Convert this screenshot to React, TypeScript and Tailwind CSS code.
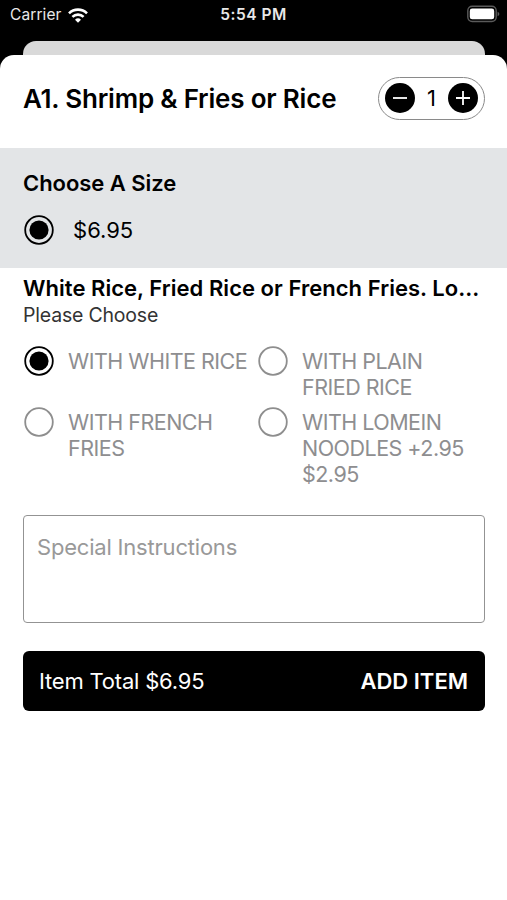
import { useState } from "react";

interface Choice {
  id: number;
  label: string;
}

const basePrice = 6.95;

const choices: Choice[] = [
  { id: 1, label: "WITH WHITE RICE" },
  { id: 2, label: "WITH PLAIN\nFRIED RICE" },
  { id: 3, label: "WITH FRENCH\nFRIES" },
  { id: 4, label: "WITH LOMEIN\nNOODLES +2.95\n$2.95" },
];

const Radio = ({ checked }: { checked: boolean }) => (
  <svg
    className={`${checked ? "text-black" : "text-[#8e8e8e]"} shrink-0`}
    width="30"
    height="30"
    viewBox="0 0 30 30"
    fill="none"
  >
    <circle cx="15" cy="15" r="13.8" stroke="currentColor" strokeWidth="1.8" />
    {checked && <circle cx="15" cy="15" r="9.6" fill="currentColor" />}
  </svg>
);

const StatusBar = () => (
  <header className="grid h-[41px] shrink-0 grid-cols-3 items-start px-[10px] text-[#e8e8e8]">
    <div className="flex items-center gap-[6px] pt-[5px]">
      <span className="text-[15.5px] leading-5 tracking-[0.1px]">Carrier</span>
      <svg width="20" height="15" viewBox="0 0 20 15" fill="none" stroke="white" strokeWidth="2.6">
        <path d="M1 5.3a12.8 12.8 0 0 1 18 0" />
        <path d="M4.4 8.900a8 8 0 0 1 11.200 0" />
        <path d="M10 14.800l-3-3.100a4.300 4.300 0 0 1 6 0z" fill="white" stroke="none" />
      </svg>
    </div>
    <span className="pt-[5px] text-center text-[15.5px] font-semibold leading-5 tracking-[0.5px] whitespace-nowrap">
      5:54 PM
    </span>
    <svg className="mt-[5px] -mr-[4px] justify-self-end" width="34" height="18" viewBox="0 0 34 18" fill="none">
      <rect x="0.8" y="1.3" width="28.4" height="15.2" rx="4.4" stroke="#5a5a5a" strokeWidth="1.4" />
      <rect x="2.800" y="3.500" width="24.400" height="10.800" rx="2.400" fill="white" />
      <path d="M30.600 6.800v4.400c1.200-.5 1.700-1.300 1.700-2.200s-.5-1.700-1.700-2.200z" fill="#5a5a5a" />
    </svg>
  </header>
);

const App = () => {
  const [quantity, setQuantity] = useState(1);
  const [selected, setSelected] = useState(1);

  return (
    <main className="flex h-[900px] w-[507px] flex-col overflow-hidden bg-black font-['Inter',sans-serif] text-black">
      <StatusBar />

      {/* Edge of the screen behind the sheet */}
      <div className="mr-[22px] ml-[23px] h-[14px] shrink-0 rounded-t-[13px] bg-[#d9d9d9]" />

      <section className="flex-1 rounded-t-[14px] bg-white">
        <div className="flex h-[93px] items-center justify-between pr-[22px] pl-[23px] pb-[7px]">
          <h1 className="pt-px text-[26px] font-semibold tracking-[-0.2px] whitespace-nowrap">
            A1. Shrimp &amp; Fries or Rice
          </h1>
          <div className="flex h-[43px] w-[107px] items-center justify-between rounded-full border border-[#8a8a8a] px-[6px]">
            <button
              onClick={() => setQuantity(Math.max(1, quantity - 1))}
              className="flex size-[30px] items-center justify-center rounded-full bg-black"
            >
              <svg width="14" height="14" viewBox="0 0 14 14" stroke="white" strokeWidth="1.8">
                <path d="M0 7h14" />
              </svg>
            </button>
            <span className="text-[22px]">{quantity}</span>
            <button
              onClick={() => setQuantity(quantity + 1)}
              className="flex size-[30px] items-center justify-center rounded-full bg-black"
            >
              <svg width="14" height="14" viewBox="0 0 14 14" stroke="white" strokeWidth="1.8">
                <path d="M0 7h14M7 0v14" />
              </svg>
            </button>
          </div>
        </div>

        {/* Size */}
        <div className="h-[120px] bg-[#e3e5e7] pt-5 pl-[23px]">
          <h2 className="text-[22px] font-semibold leading-[30px] tracking-[-0.05px]">Choose A Size</h2>
          <div className="mt-[17px] flex items-center gap-[19px] pl-px">
            <Radio checked />
            <span className="text-[22px] leading-[30px]">${basePrice}</span>
          </div>
        </div>

        <div className="pt-[6px] pr-[22px] pl-[23px]">
          <h2 className="text-[22px] font-semibold leading-[28px] tracking-[0.04px] whitespace-nowrap">
            White Rice, Fried Rice or French Fries. Lo...
          </h2>
          <p className="mt-px text-[19.5px] leading-6 tracking-[-0.2px] text-[#333]">Please Choose</p>

          <div className="mt-[21px] grid grid-cols-[234px_1fr] gap-y-[9px]">
            {choices.map((choice) => (
              <div
                key={choice.id}
                onClick={() => setSelected(choice.id)}
                className="flex items-start gap-[14px] pl-px"
              >
                <div className="-mt-[2px] h-[28px]">
                  <Radio checked={selected === choice.id} />
                </div>
                <span className="text-[21.5px] leading-[26px] tracking-[-0.52px] text-[#8e8e90] whitespace-pre">
                  {choice.label}
                </span>
              </div>
            ))}
          </div>

          <textarea
            placeholder="Special Instructions"
            className="mt-[28px] block h-[108px] w-full resize-none rounded-[4px] border border-[#939393] px-[13px] py-[17px] text-[22px] leading-[28px] tracking-[-0.2px] placeholder:text-[#999]"
          />

          <button className="mt-[28px] flex h-[60px] w-full items-center justify-between rounded-[6px] bg-black pr-[17px] pl-4 text-[22px] text-white">
            <span className="tracking-[-0.2px]">Item Total ${basePrice}</span>
            <span className="font-semibold">ADD ITEM</span>
          </button>
        </div>
      </section>
    </main>
  );
};

export default App;
